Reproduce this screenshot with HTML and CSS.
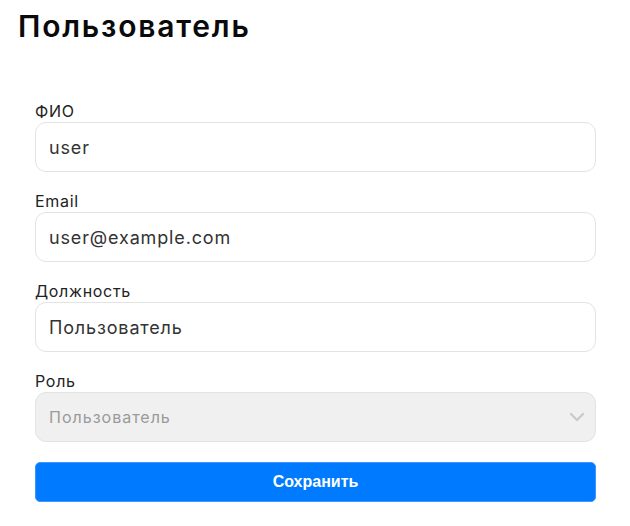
FILE: index.html
```html
<!DOCTYPE html>
<html lang="ru">
<head>
<meta charset="utf-8">
<link rel="stylesheet" href="styles.css">
</head>
<body>
<div class="page">
  <h1 class="title">Пользователь</h1>
  <form class="form">
    <div class="field">
      <label class="label">ФИО</label>
      <div class="input">user</div>
    </div>
    <div class="field">
      <label class="label">Email</label>
      <div class="input">user@example.com</div>
    </div>
    <div class="field">
      <label class="label">Должность</label>
      <div class="input">Пользователь</div>
    </div>
    <div class="field">
      <label class="label">Роль</label>
      <div class="select">
        <span>Пользователь</span>
        <svg class="chevron" width="16" height="10" viewBox="0 0 16 10"><path d="M2 2 L8 8 L14 2" fill="none" stroke="#c9c9c9" stroke-width="2.2" stroke-linecap="round" stroke-linejoin="round"/></svg>
      </div>
    </div>
    <button type="button" class="btn">Сохранить</button>
  </form>
</div>
</body>
</html>
```

FILE: styles.css
```css
* { box-sizing: border-box; }
body {
  margin: 0;
  background: #fff;
  font-family: "Inter", "Noto Sans", sans-serif;
  color: #222;
}
.page {
  padding: 8px 34px 0 18px;
}
.title {
  margin: 0 0 58px 0;
  font-size: 30px;
  line-height: 36px;
  font-weight: 600;
  color: #0a0a0a;
  letter-spacing: 1.8px;
}
.form {
  padding-left: 17px;
  display: flex;
  flex-direction: column;
}
.field {
  display: flex;
  flex-direction: column;
  margin-bottom: 20px;
}
.label {
  font-size: 16px;
  line-height: 19px;
  margin-bottom: 1px;
  color: #222;
  letter-spacing: 0.7px;
}
.input, .select {
  height: 50px;
  border: 1px solid #e3e3e3;
  border-radius: 11px;
  padding: 0 13px;
  display: flex;
  align-items: center;
  font-size: 18px;
  color: #333;
  letter-spacing: 0.85px;
}
.select {
  background: #f0f0f0;
  font-size: 16px;
  color: #9a9a9a;
  justify-content: space-between;
  padding-right: 10px;
  letter-spacing: 1px;
}
.btn {
  height: 40px;
  border: 1px solid #3d95ff;
  border-radius: 5px;
  background: #007bff;
  color: #fff;
  font-family: "Liberation Sans", Arial, sans-serif;
  font-weight: bold;
  font-size: 16px;
}
```
